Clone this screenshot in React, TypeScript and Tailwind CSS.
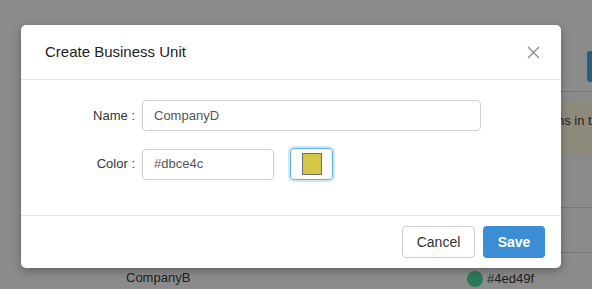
import React from "react";

export default function App() {
  return (
    <div
      className="relative w-[592px] h-[289px] overflow-hidden bg-[#8b8b8b]"
      style={{ fontFamily: '"Liberation Sans", Arial, sans-serif' }}
    >
      {/* background page (dimmed) */}
      <div className="absolute left-[587px] top-[51px] w-[20px] h-[31px] rounded-[3px] bg-[#2c5b80]" />
      <div className="absolute left-[561px] top-[91px] w-[40px] h-px bg-[#777]" />
      <div className="absolute left-[561px] top-[101px] w-[40px] h-[55px] bg-[#8d8a7b] flex items-start pt-[10px]">
        <span className="text-[13px] text-[#1f1f1f] ml-[-4px] whitespace-nowrap">ns in t</span>
      </div>
      <div className="absolute left-[561px] top-[207px] w-[40px] h-px bg-[#777]" />
      <div className="absolute left-[561px] top-[252px] w-[40px] h-px bg-[#777]" />
      <div className="absolute left-[126px] top-[268px] text-[13px] text-[#1c1c1c]">CompanyB</div>
      <div className="absolute left-[467px] top-[269px] flex items-center gap-[4px]">
        <span className="w-[16px] h-[16px] rounded-full bg-[#2a7a5a]" />
        <span className="text-[13px] text-[#1c1c1c]">#4ed49f</span>
      </div>

      {/* modal */}
      <div className="absolute left-[21px] top-[25px] w-[540px] h-[243px] bg-white rounded-[5px] shadow-[0_3px_9px_rgba(0,0,0,0.3)] flex flex-col">
        <div className="h-[55px] border-b border-[#e5e5e5] flex items-center justify-between pl-[24px] pr-[21px]">
          <span className="text-[15px] text-[#222]">Create Business Unit</span>
          <svg width="13" height="13" viewBox="0 0 13 13" className="mt-[1px]">
            <path d="M1 1 L12 12 M12 1 L1 12" stroke="#8a8a8a" strokeWidth="1.2" fill="none" />
          </svg>
        </div>
        <div className="h-[136px] border-b border-[#e5e5e5] pt-[20px] flex flex-col gap-[17px]">
          <div className="flex items-center">
            <label className="w-[114px] text-right text-[13px] text-[#333]">Name :</label>
            <div className="ml-[7px] w-[339px] h-[31px] border border-[#cfcfcf] rounded-[4px] flex items-center pl-[11px] text-[13px] text-[#555]">
              CompanyD
            </div>
          </div>
          <div className="flex items-center">
            <label className="w-[114px] text-right text-[13px] text-[#333]">Color :</label>
            <div className="ml-[7px] w-[132px] h-[31px] border border-[#cfcfcf] rounded-[4px] flex items-center pl-[11px] text-[13px] text-[#555]">
              #dbce4c
            </div>
            <div className="ml-[16px] w-[43px] h-[32px] border border-[#66afe9] rounded-[4px] shadow-[0_0_0_2px_rgba(102,175,233,0.3)] flex items-center justify-center">
              <span className="w-[20px] h-[22px] bg-[#d6c646] border border-[#6e6e6e]" />
            </div>
          </div>
        </div>
        <div className="flex-1 flex items-center justify-end pr-[16px] gap-[8px]">
          <button className="w-[73px] h-[32px] border border-[#cccccc] rounded-[4px] bg-white text-[14px] text-[#333]">
            Cancel
          </button>
          <button className="w-[62px] h-[32px] rounded-[4px] bg-[#3b8ed3] text-[14px] font-bold text-white">
            Save
          </button>
        </div>
      </div>
    </div>
  );
}
